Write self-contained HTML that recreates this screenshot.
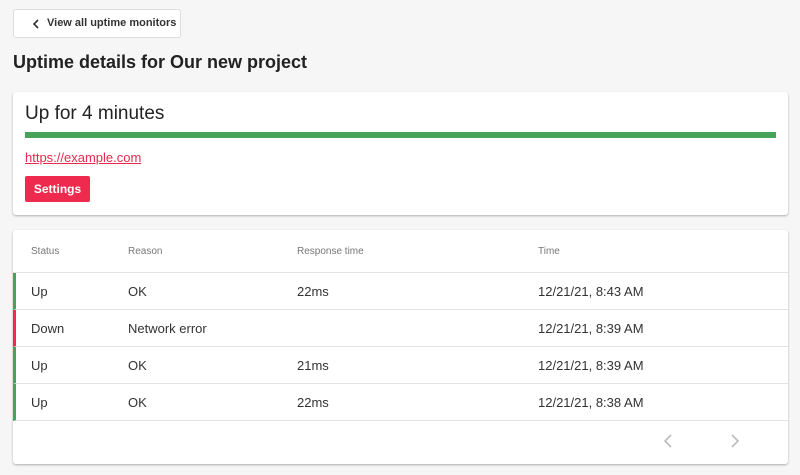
<!DOCTYPE html><html><head><style>
body{margin:0;background:#f6f6f6;font-family:"Liberation Sans",sans-serif;color:#222;width:800px;height:475px;overflow:hidden;position:relative}
.abs{position:absolute;white-space:nowrap}
.back{left:13px;top:9px;width:166px;height:27px;border:1px solid #ddd;background:#fff;border-radius:3px;font-size:11px;font-weight:bold;color:#333}
.card{background:#fff;border-radius:3px;box-shadow:0 1px 2px rgba(0,0,0,.3)}
.row{position:absolute;left:0;width:775px;height:36px;border-bottom:1px solid #e3e3e3;font-size:13px;color:#333}
.row span{position:absolute;top:11px;white-space:nowrap}
</style></head><body>
<div class="abs back"><svg class="abs" style="left:18px;top:9px" width="8" height="10"><path d="M6 1L2 5l4 4" fill="none" stroke="#333" stroke-width="1.6"/></svg><span class="abs" style="left:33px;top:7px">View all uptime monitors</span></div>
<div class="abs" style="left:13px;top:52px;font-size:18px;font-weight:bold;color:#222">Uptime details for Our new project</div>
<div class="abs card" style="left:13px;top:92px;width:775px;height:123px">
<div class="abs" style="left:12px;top:11px;font-size:19px">Up for 4 minutes</div>
<div class="abs" style="left:12px;top:40px;width:751px;height:6px;background:#47a35a"></div>
<div class="abs" style="left:12px;top:58px;font-size:13px;color:#e8294c;text-decoration:underline">https://example.com</div>
<div class="abs" style="left:12px;top:84px;width:65px;height:26px;background:#ee2a4e;border-radius:2px;color:#fff;font-size:12px;font-weight:bold;text-align:center;line-height:26px">Settings</div>
</div>
<div class="abs card" style="left:13px;top:230px;width:775px;height:234px">
<div class="abs" style="top:16px;left:18px;font-size:10px;color:#777">Status</div>
<div class="abs" style="top:16px;left:115px;font-size:10px;color:#777">Reason</div>
<div class="abs" style="top:16px;left:284px;font-size:10px;color:#777">Response time</div>
<div class="abs" style="top:16px;left:525px;font-size:10px;color:#777">Time</div>
<div class="abs" style="top:42px;left:0;width:775px;border-top:1px solid #e3e3e3"></div>
<div class="row" style="top:43px;border-left:3px solid #47a35a;width:772px"><span style="left:15px">Up</span><span style="left:112px">OK</span><span style="left:281px">22ms</span><span style="left:522px">12/21/21, 8:43 AM</span></div>
<div class="row" style="top:80px;border-left:3px solid #ee2a4e;width:772px"><span style="left:15px">Down</span><span style="left:112px">Network error</span><span style="left:522px">12/21/21, 8:39 AM</span></div>
<div class="row" style="top:117px;border-left:3px solid #47a35a;width:772px"><span style="left:15px">Up</span><span style="left:112px">OK</span><span style="left:281px">21ms</span><span style="left:522px">12/21/21, 8:39 AM</span></div>
<div class="row" style="top:154px;border-left:3px solid #47a35a;width:772px"><span style="left:15px">Up</span><span style="left:112px">OK</span><span style="left:281px">22ms</span><span style="left:522px">12/21/21, 8:38 AM</span></div>
<svg class="abs" style="left:650px;top:204px" width="10" height="14"><path d="M8 1L2 7l6 6" fill="none" stroke="#bbb" stroke-width="1.6"/></svg>
<svg class="abs" style="left:717px;top:204px" width="10" height="14"><path d="M2 1l6 6-6 6" fill="none" stroke="#bbb" stroke-width="1.6"/></svg>
</div>
</body></html>
